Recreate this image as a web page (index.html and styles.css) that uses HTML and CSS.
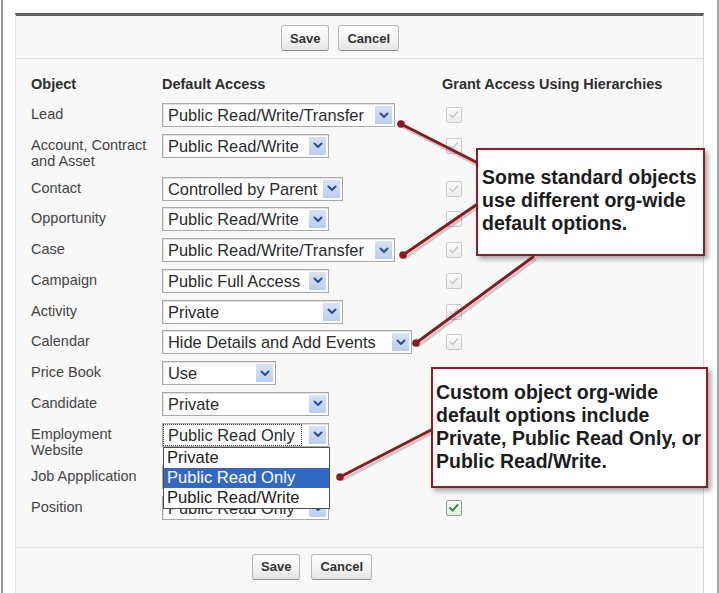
FILE: index.html
```html
<!DOCTYPE html>
<html>
<head>
<meta charset="utf-8">
<link rel="stylesheet" href="styles.css">
</head>
<body>
<div class="page">
  <div class="panel">
    <div class="btnbar btnbar-top">
      <button class="btn">Save</button>
      <button class="btn">Cancel</button>
    </div>
    <div class="table">
      <div class="row head">
        <div>Object</div>
        <div>Default Access</div>
        <div>Grant Access Using Hierarchies</div>
      </div>

      <div class="row">
        <div class="label">Lead</div>
        <div><div class="sel w233"><span class="val">Public Read/Write/Transfer</span><span class="arrow"><svg viewBox="0 0 10 7" width="10" height="7"><path d="M1.5 1.5 L5 5 L8.5 1.5"/></svg></span></div></div>
        <div><span class="cb"><svg viewBox="0 0 16 16" width="14" height="14"><path d="M3.5 8 L6.5 11 L12 4.5"/></svg></span></div>
      </div>

      <div class="row">
        <div class="label">Account, Contract<br>and Asset</div>
        <div><div class="sel w167"><span class="val">Public Read/Write</span><span class="arrow"><svg viewBox="0 0 10 7" width="10" height="7"><path d="M1.5 1.5 L5 5 L8.5 1.5"/></svg></span></div></div>
        <div><span class="cb"><svg viewBox="0 0 16 16" width="14" height="14"><path d="M3.5 8 L6.5 11 L12 4.5"/></svg></span></div>
      </div>

      <div class="row">
        <div class="label">Contact</div>
        <div><div class="sel w181"><span class="val">Controlled by Parent</span><span class="arrow"><svg viewBox="0 0 10 7" width="10" height="7"><path d="M1.5 1.5 L5 5 L8.5 1.5"/></svg></span></div></div>
        <div><span class="cb"><svg viewBox="0 0 16 16" width="14" height="14"><path d="M3.5 8 L6.5 11 L12 4.5"/></svg></span></div>
      </div>

      <div class="row">
        <div class="label">Opportunity</div>
        <div><div class="sel w167"><span class="val">Public Read/Write</span><span class="arrow"><svg viewBox="0 0 10 7" width="10" height="7"><path d="M1.5 1.5 L5 5 L8.5 1.5"/></svg></span></div></div>
        <div><span class="cb"><svg viewBox="0 0 16 16" width="14" height="14"><path d="M3.5 8 L6.5 11 L12 4.5"/></svg></span></div>
      </div>

      <div class="row">
        <div class="label">Case</div>
        <div><div class="sel w233"><span class="val">Public Read/Write/Transfer</span><span class="arrow"><svg viewBox="0 0 10 7" width="10" height="7"><path d="M1.5 1.5 L5 5 L8.5 1.5"/></svg></span></div></div>
        <div><span class="cb"><svg viewBox="0 0 16 16" width="14" height="14"><path d="M3.5 8 L6.5 11 L12 4.5"/></svg></span></div>
      </div>

      <div class="row">
        <div class="label">Campaign</div>
        <div><div class="sel w167"><span class="val">Public Full Access</span><span class="arrow"><svg viewBox="0 0 10 7" width="10" height="7"><path d="M1.5 1.5 L5 5 L8.5 1.5"/></svg></span></div></div>
        <div><span class="cb"><svg viewBox="0 0 16 16" width="14" height="14"><path d="M3.5 8 L6.5 11 L12 4.5"/></svg></span></div>
      </div>

      <div class="row">
        <div class="label">Activity</div>
        <div><div class="sel w181"><span class="val">Private</span><span class="arrow"><svg viewBox="0 0 10 7" width="10" height="7"><path d="M1.5 1.5 L5 5 L8.5 1.5"/></svg></span></div></div>
        <div><span class="cb"><svg viewBox="0 0 16 16" width="14" height="14"><path d="M3.5 8 L6.5 11 L12 4.5"/></svg></span></div>
      </div>

      <div class="row">
        <div class="label">Calendar</div>
        <div><div class="sel w250"><span class="val">Hide Details and Add Events</span><span class="arrow"><svg viewBox="0 0 10 7" width="10" height="7"><path d="M1.5 1.5 L5 5 L8.5 1.5"/></svg></span></div></div>
        <div><span class="cb"><svg viewBox="0 0 16 16" width="14" height="14"><path d="M3.5 8 L6.5 11 L12 4.5"/></svg></span></div>
      </div>

      <div class="row">
        <div class="label">Price Book</div>
        <div><div class="sel w114"><span class="val">Use</span><span class="arrow"><svg viewBox="0 0 10 7" width="10" height="7"><path d="M1.5 1.5 L5 5 L8.5 1.5"/></svg></span></div></div>
        <div></div>
      </div>

      <div class="row">
        <div class="label">Candidate</div>
        <div><div class="sel w167"><span class="val">Private</span><span class="arrow"><svg viewBox="0 0 10 7" width="10" height="7"><path d="M1.5 1.5 L5 5 L8.5 1.5"/></svg></span></div></div>
        <div><span class="cb on"><svg viewBox="0 0 16 16" width="14" height="14"><path d="M3.5 8 L6.5 11 L12 4.5"/></svg></span></div>
      </div>

      <div class="row">
        <div class="label">Employment<br>Website</div>
        <div>
          <div class="sel w167 focus"><span class="val">Public Read Only</span><span class="arrow"><svg viewBox="0 0 10 7" width="10" height="7"><path d="M1.5 1.5 L5 5 L8.5 1.5"/></svg></span>
            <div class="dropdown">
              <div class="opt">Private</div>
              <div class="opt hl">Public Read Only</div>
              <div class="opt">Public Read/Write</div>
            </div>
          </div>
        </div>
        <div><span class="cb on"><svg viewBox="0 0 16 16" width="14" height="14"><path d="M3.5 8 L6.5 11 L12 4.5"/></svg></span></div>
      </div>

      <div class="row">
        <div class="label">Job Appplication</div>
        <div><div class="sel w167"><span class="val">Public Read Only</span><span class="arrow"><svg viewBox="0 0 10 7" width="10" height="7"><path d="M1.5 1.5 L5 5 L8.5 1.5"/></svg></span></div></div>
        <div><span class="cb on"><svg viewBox="0 0 16 16" width="14" height="14"><path d="M3.5 8 L6.5 11 L12 4.5"/></svg></span></div>
      </div>

      <div class="row">
        <div class="label">Position</div>
        <div><div class="sel w167"><span class="val">Public Read Only</span><span class="arrow"><svg viewBox="0 0 10 7" width="10" height="7"><path d="M1.5 1.5 L5 5 L8.5 1.5"/></svg></span></div></div>
        <div><span class="cb on"><svg viewBox="0 0 16 16" width="14" height="14"><path d="M3.5 8 L6.5 11 L12 4.5"/></svg></span></div>
      </div>
    </div>
    <div class="btnbar btnbar-bottom">
      <button class="btn">Save</button>
      <button class="btn">Cancel</button>
    </div>
  </div>
</div>

<div class="callout callout-1">Some standard objects<br>use different org-wide<br>default options.</div>
<div class="callout callout-2">Custom object org-wide<br>default options include<br>Private, Public Read Only, or<br>Public Read/Write.</div>

<svg class="arrows" width="719" height="593" viewBox="0 0 719 593">
  <g class="shadow">
    <line x1="403" y1="127" x2="477" y2="165"/>
    <line x1="405" y1="258" x2="477" y2="208"/>
    <line x1="418" y1="346" x2="535" y2="260"/>
    <line x1="342" y1="480" x2="432" y2="433"/>
  </g>
  <g class="lines">
    <line x1="401" y1="124" x2="476" y2="162"/>
    <line x1="403" y1="255" x2="476" y2="205"/>
    <line x1="416" y1="343" x2="533" y2="257"/>
    <line x1="340" y1="477" x2="431" y2="430"/>
    <circle cx="401" cy="124" r="3.8"/>
    <circle cx="403" cy="255" r="3.8"/>
    <circle cx="416" cy="343" r="3.8"/>
    <circle cx="340" cy="477" r="3.8"/>
  </g>
</svg>
</body>
</html>
```

FILE: styles.css
```css
* { box-sizing: border-box; }

html, body {
  margin: 0;
  padding: 0;
  background: #fff;
  font-family: "Liberation Sans", Arial, sans-serif;
  color: #333;
}

body {
  position: relative;
  width: 719px;
  height: 593px;
  overflow: hidden;
}

.page {
  margin-left: 1px;
  width: 718px;
  height: 593px;
  border-left: 2px solid #9a9a9a;
  border-right: 2px solid #a8a8a8;
  padding: 13px 0 0 12px;
}

.panel {
  width: 689px;
  height: 580px;
  background: #f8f8f8;
  border-top: 3px solid #626262;
  border-left: 1px solid #e4e4e4;
  border-right: 1px solid #d6d6d6;
}

.btnbar {
  display: flex;
}

.btnbar-top {
  padding: 9px 0 7px 265px;
  gap: 9px;
  border-bottom: 1px solid #e0e0e0;
}

.btnbar-bottom {
  padding: 6px 0 0 236px;
  gap: 11px;
  border-top: 1px solid #e0e0e0;
}

.btn {
  height: 26px;
  padding: 0 8px;
  font-family: "Liberation Sans", Arial, sans-serif;
  font-size: 13px;
  font-weight: bold;
  color: #333;
  background: linear-gradient(#ffffff, #f2f2f2 60%, #e4e4e4);
  border: 1px solid #b8b8b8;
  border-bottom-color: #8c8c8c;
  border-radius: 3px;
}

.table {
  padding: 17px 0 23px 15px;
}

.row {
  display: grid;
  grid-template-columns: 131px 280px 1fr;
  align-items: start;
  padding: 3px 0 3.75px;
}

.row.head {
  padding: 0 0 8px;
  font-size: 14.5px;
  font-weight: bold;
  line-height: 16px;
  color: #2e2e2e;
}

.label {
  font-size: 14.5px;
  line-height: 16.5px;
  padding-top: 3px;
  color: #444;
}

.sel {
  position: relative;
  display: flex;
  align-items: center;
  height: 24px;
  background: #fff;
  border: 1px solid #a9a9a9;
  box-shadow: inset 1px 1px 0 #e2e2e2;
  font-size: 16.4px;
  color: #2b2b2b;
}

.w114 { width: 114px; }
.w167 { width: 167px; }
.w181 { width: 181px; }
.w233 { width: 233px; }
.w250 { width: 250px; }

.val {
  flex: 1;
  padding-left: 5px;
  line-height: 22px;
  white-space: nowrap;
  overflow: hidden;
}

.focus .val {
  border: 1px dotted #444;
  line-height: 20px;
  padding-left: 4px;
  margin-right: 3px;
  height: 22px;
}

.arrow {
  display: flex;
  align-items: center;
  justify-content: center;
  flex: none;
  width: 17px;
  height: 18px;
  margin: 0 2px 0 4px;
  background: linear-gradient(#d7e2f6, #bccdee);
}

.arrow svg path {
  fill: none;
  stroke: #24509f;
  stroke-width: 2;
  stroke-linecap: round;
  stroke-linejoin: round;
}

.dropdown {
  position: absolute;
  top: 23px;
  left: 0;
  width: 167px;
  z-index: 2;
  background: #fff;
  border: 1px solid #4f4f4f;
}

.opt {
  height: 20px;
  line-height: 20px;
  padding-left: 3px;
  font-size: 16.6px;
  color: #222;
  white-space: nowrap;
}

.opt.hl {
  background: #3168c6;
  color: #fff;
}

.cb {
  display: flex;
  align-items: center;
  justify-content: center;
  width: 16px;
  height: 16px;
  margin: 4px 0 0 4px;
  border: 1px solid #c9c9c9;
  border-radius: 2px;
  background: linear-gradient(#fbfbfb, #ededed);
}

.cb svg path {
  fill: none;
  stroke: #c4c4c4;
  stroke-width: 1.6;
  stroke-linecap: round;
  stroke-linejoin: round;
}

.cb.on {
  border-color: #87a287;
  background: linear-gradient(#f7fbf7, #e7efe7);
}

.cb.on svg path {
  stroke: #2f8a30;
  stroke-width: 2.2;
}

.callout {
  position: absolute;
  z-index: 3;
  background: #fff;
  border: 2px solid #8e1d24;
  box-shadow: 3px 3px 5px rgba(0, 0, 0, 0.35);
  font-family: "Liberation Sans", Arial, sans-serif;
  font-size: 19.5px;
  font-weight: bold;
  line-height: 23px;
  color: #1c1c1c;
  white-space: nowrap;
}

.callout-1 {
  left: 476px;
  top: 148px;
  width: 229px;
  height: 108px;
  padding: 16px 0 0 4px;
}

.callout-2 {
  left: 431px;
  top: 367px;
  width: 277px;
  height: 121px;
  padding: 12px 0 0 3px;
}

.arrows {
  position: absolute;
  left: 0;
  top: 0;
  z-index: 4;
}

.arrows .lines line {
  stroke: #8b1a1f;
  stroke-width: 3;
  stroke-linecap: round;
}

.arrows .lines circle {
  fill: #8b1a1f;
}

.arrows .shadow line {
  stroke: rgba(0, 0, 0, 0.18);
  stroke-width: 3;
  stroke-linecap: round;
}
```
